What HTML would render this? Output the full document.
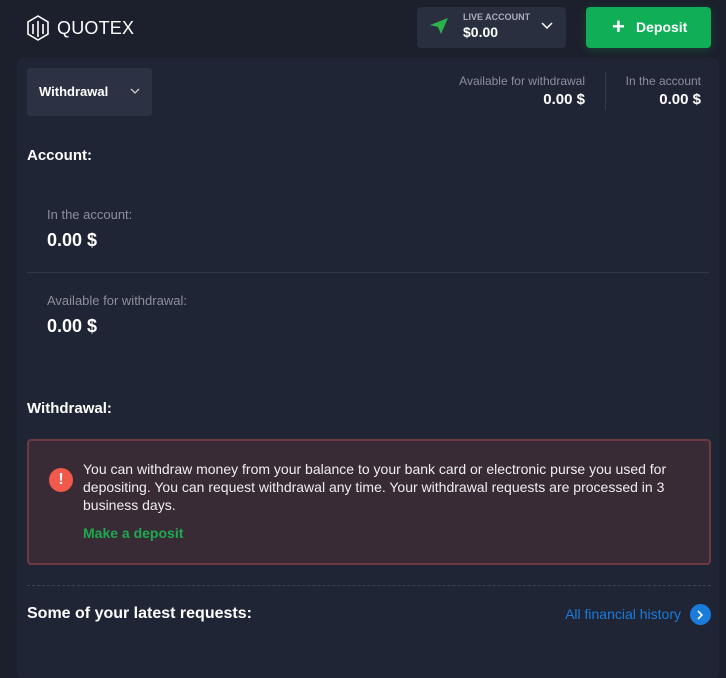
<!DOCTYPE html>
<html><head><meta charset="utf-8"><style>
*{box-sizing:border-box;margin:0;padding:0}
body{width:726px;height:660px;background:#1c1f2c;font-family:"Liberation Sans",sans-serif;color:#fff;position:relative;overflow:hidden}
.abs{position:absolute}
.panel{left:17px;top:58px;width:702px;height:620px;background:#202535;border-radius:6px}
.b{font-weight:bold}
.g{color:#8b8f9c}
</style></head><body>
<svg class="abs" style="left:27px;top:15px" width="22" height="26" viewBox="0 0 22 26" fill="none" stroke="#fff" stroke-width="1.6"><path d="M11 1 L21 7 V19 L11 25 L1 19 V7 Z"/><path d="M6 9v10M11 6v16M16 9v10"/></svg>
<div class="abs" style="left:57px;top:18px;font-size:18px;letter-spacing:0.2px">QUOTEX</div>

<div class="abs" style="left:417px;top:7px;width:149px;height:41px;background:#2a2f40;border-radius:4px"></div>
<svg class="abs" style="left:429px;top:17px" width="20" height="18" viewBox="0 0 20 18"><path d="M1 8 L19 1 L12 17 L9 10 Z" fill="#2bb24c"/></svg>
<div class="abs g b" style="left:463px;top:12px;font-size:9px;color:#a9adb8">LIVE ACCOUNT</div>
<div class="abs b" style="left:463px;top:24px;font-size:14px">$0.00</div>
<svg class="abs" style="left:541px;top:22px" width="12" height="8" viewBox="0 0 12 8" fill="none" stroke="#fff" stroke-width="1.5"><path d="M1 1l5 5 5-5"/></svg>

<div class="abs" style="left:586px;top:7px;width:125px;height:41px;background:#0fae57;border-radius:4px;box-shadow:0 2px 10px rgba(15,174,87,.25)"></div>
<div class="abs b" style="left:612px;top:15px;font-size:22px;line-height:24px">+</div>
<div class="abs b" style="left:636px;top:19px;font-size:14px">Deposit</div>

<div class="abs panel"></div>
<div class="abs" style="left:27px;top:68px;width:125px;height:48px;background:#2c3143;border-radius:3px"></div>
<div class="abs b" style="left:39px;top:84px;font-size:13px">Withdrawal</div>
<svg class="abs" style="left:130px;top:88px" width="10" height="7" viewBox="0 0 10 7" fill="none" stroke="#ccc" stroke-width="1.3"><path d="M1 1l4 4 4-4"/></svg>

<div class="abs g" style="left:440px;top:74px;width:145px;text-align:right;font-size:12px">Available for withdrawal</div>
<div class="abs b" style="left:440px;top:91px;width:145px;text-align:right;font-size:15px">0.00 $</div>
<div class="abs" style="left:605px;top:72px;width:1px;height:38px;background:#343a4c"></div>
<div class="abs g" style="left:600px;top:74px;width:101px;text-align:right;font-size:12px">In the account</div>
<div class="abs b" style="left:600px;top:91px;width:101px;text-align:right;font-size:15px">0.00 $</div>

<div class="abs b" style="left:27px;top:147px;font-size:15px">Account:</div>
<div class="abs g" style="left:47px;top:207px;font-size:13px">In the account:</div>
<div class="abs b" style="left:47px;top:230px;font-size:18px">0.00 $</div>
<div class="abs" style="left:27px;top:272px;width:682px;height:1px;background:#323849"></div>
<div class="abs g" style="left:47px;top:293px;font-size:13px">Available for withdrawal:</div>
<div class="abs b" style="left:47px;top:316px;font-size:18px">0.00 $</div>

<div class="abs b" style="left:27px;top:400px;font-size:15px">Withdrawal:</div>
<div class="abs" style="left:27px;top:439px;width:684px;height:126px;background:#382b36;border:2px solid #6b3b3f;border-radius:4px"></div>
<div class="abs" style="left:49px;top:468px;width:24px;height:24px;border-radius:50%;background:#f0594b;text-align:center;font-weight:bold;font-size:16px;line-height:24px">!</div>
<div class="abs" style="left:83px;top:460px;width:610px;font-size:14px;line-height:18px;color:#eee">You can withdraw money from your balance to your bank card or electronic purse you used for depositing. You can request withdrawal any time. Your withdrawal requests are processed in 3 business days.</div>
<div class="abs b" style="left:83px;top:525px;font-size:14px;color:#1ea84f">Make a deposit</div>

<div class="abs" style="left:27px;top:585px;width:684px;border-top:1px dashed #3c4255"></div>
<div class="abs b" style="left:27px;top:605px;font-size:16px">Some of your latest requests:</div>
<div class="abs" style="left:540px;top:606px;width:141px;text-align:right;font-size:14px;color:#1a7bdb">All financial history</div>
<div class="abs" style="left:690px;top:604px;width:21px;height:21px;border-radius:50%;background:#1a7bdb"></div>
<svg class="abs" style="left:697px;top:610px" width="7" height="10" viewBox="0 0 7 10" fill="none" stroke="#fff" stroke-width="1.6"><path d="M1 1l4 4-4 4"/></svg>
</body></html>
